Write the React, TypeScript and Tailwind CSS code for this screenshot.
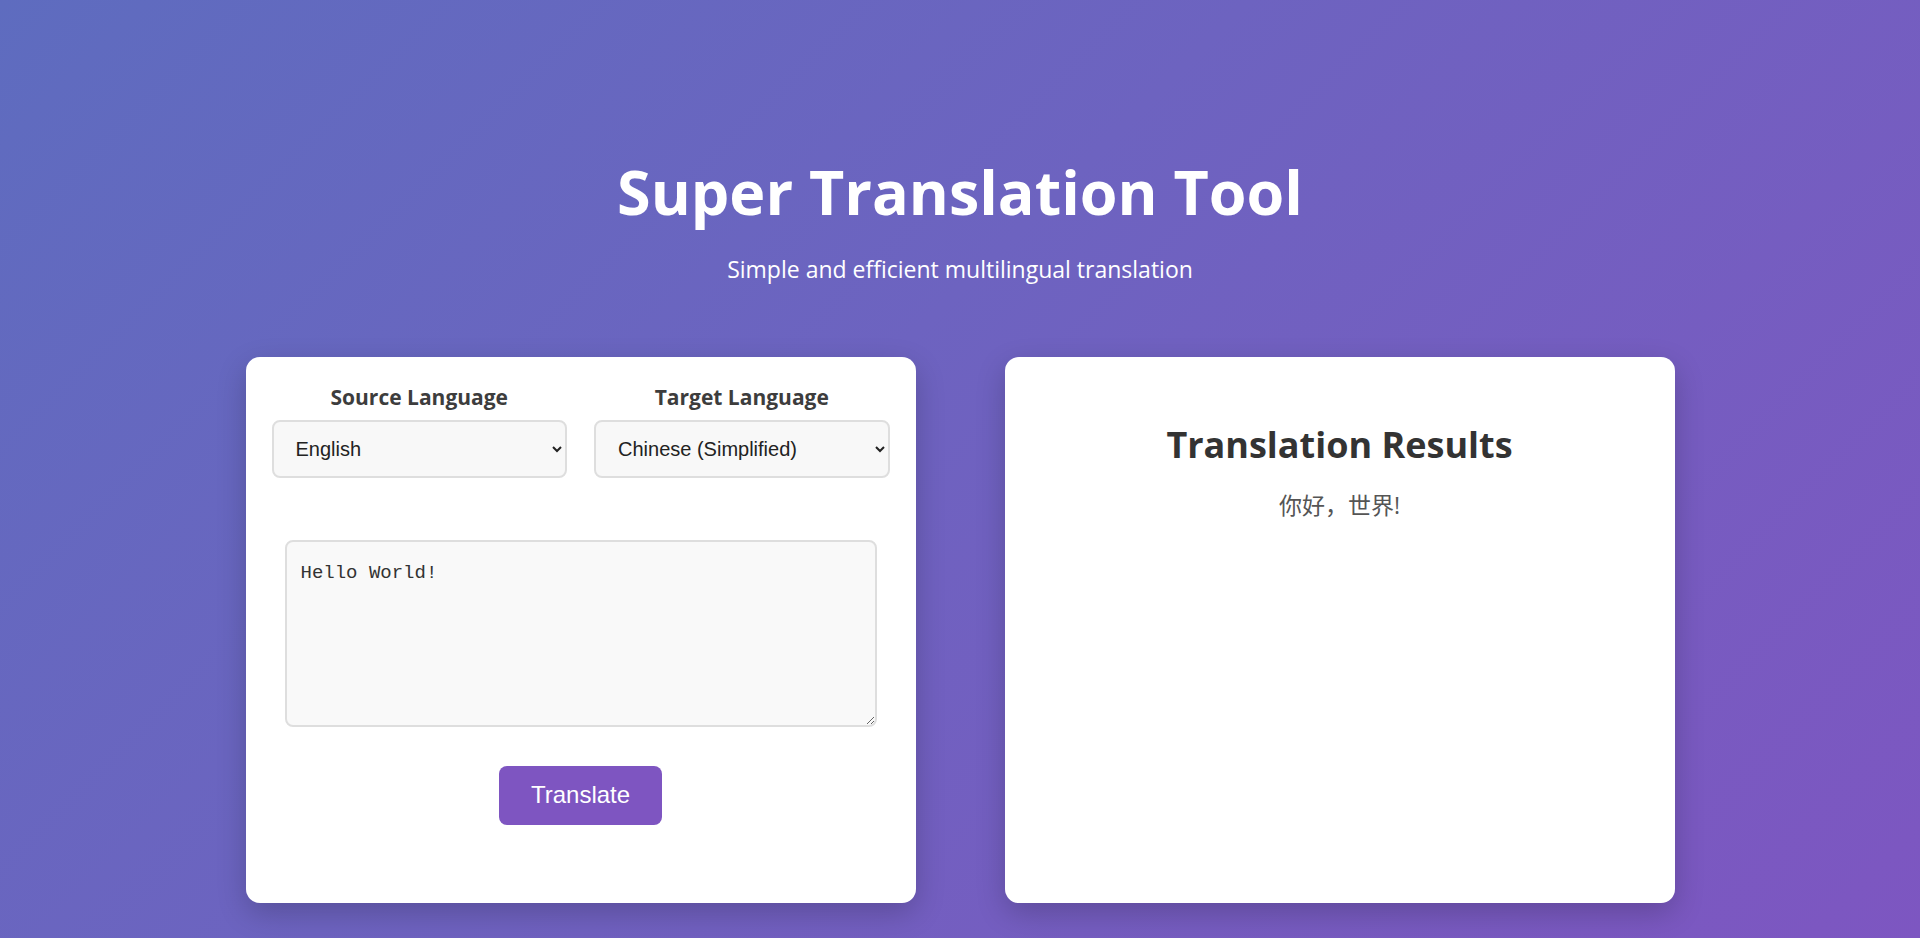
import React, { useState } from "react";

const languages = [
  "English",
  "Chinese (Simplified)",
  "Chinese (Traditional)",
  "Japanese",
  "Korean",
  "French",
  "German",
  "Spanish",
];

const App = () => {
  const [source, setSource] = useState("English");
  const [target, setTarget] = useState("Chinese (Simplified)");
  const [text, setText] = useState("Hello World!");

  return (
    <div className="min-h-screen w-full bg-linear-135 from-[#5e6cbf] to-[#7d56c1] font-['Open_Sans','Noto_Sans',sans-serif]">
      <div className="flex flex-col items-center pt-[155px]">
        <h1 className="text-[61px] font-bold leading-[1.2] text-white">
          Super Translation Tool
        </h1>
        <p className="mt-[24px] text-[23px] text-white">
          Simple and efficient multilingual translation
        </p>
      </div>

      <div className="mt-[70px] flex justify-center gap-[89px] pb-[36px]">
        {/* input card */}
        <div className="flex h-[546px] w-[670px] flex-col rounded-[14px] bg-white px-[26px] pt-[27px] shadow-[0_10px_30px_rgba(0,0,0,0.2)]">
          <div className="grid grid-cols-2 gap-[27px]">
            <div className="flex flex-col items-center">
              <label className="text-[21px] font-bold leading-[26px] text-[#3d3d3d]">
                Source Language
              </label>
              <select
                value={source}
                onChange={(e) => setSource(e.target.value)}
                className="mt-[10px] h-[58px] w-full rounded-[8px] border-2 border-[#dedede] bg-[#f8f8f8] pl-[18px] pr-[10px] font-['Liberation_Sans',Arial,sans-serif] text-[20px] text-[#222]"
              >
                {languages.map((l) => (
                  <option key={l}>{l}</option>
                ))}
              </select>
            </div>
            <div className="flex flex-col items-center">
              <label className="text-[21px] font-bold leading-[26px] text-[#3d3d3d]">
                Target Language
              </label>
              <select
                value={target}
                onChange={(e) => setTarget(e.target.value)}
                className="mt-[10px] h-[58px] w-full rounded-[8px] border-2 border-[#dedede] bg-[#f8f8f8] pl-[18px] pr-[10px] font-['Liberation_Sans',Arial,sans-serif] text-[20px] text-[#222]"
              >
                {languages.map((l) => (
                  <option key={l}>{l}</option>
                ))}
              </select>
            </div>
          </div>

          <textarea
            value={text}
            onChange={(e) => setText(e.target.value)}
            className="mx-[13px] mt-[62px] h-[187px] rounded-[8px] border-2 border-[#dedede] bg-[#f9f9f9] px-[14px] pt-[19px] pb-[14px] font-['Liberation_Mono',monospace] text-[19px] leading-[1.3] text-[#333] outline-none"
          />

          <div className="mt-[39px] flex justify-center">
            <button className="h-[59px] w-[163px] rounded-[8px] bg-[#7e55c1] font-['Liberation_Sans',Arial,sans-serif] text-[24px] text-white">
              Translate
            </button>
          </div>
        </div>

        {/* result card */}
        <div className="flex h-[546px] w-[670px] flex-col items-center rounded-[14px] bg-white pt-[66px] shadow-[0_10px_30px_rgba(0,0,0,0.2)]">
          <h2 className="text-[36px] font-bold leading-[1.2] text-[#333]">
            Translation Results
          </h2>
          <p className="mt-[22px] font-['Open_Sans','Noto_Sans_CJK_SC',sans-serif] text-[23px] text-[#555]">
            你好，世界!
          </p>
        </div>
      </div>
    </div>
  );
};

export default App;
